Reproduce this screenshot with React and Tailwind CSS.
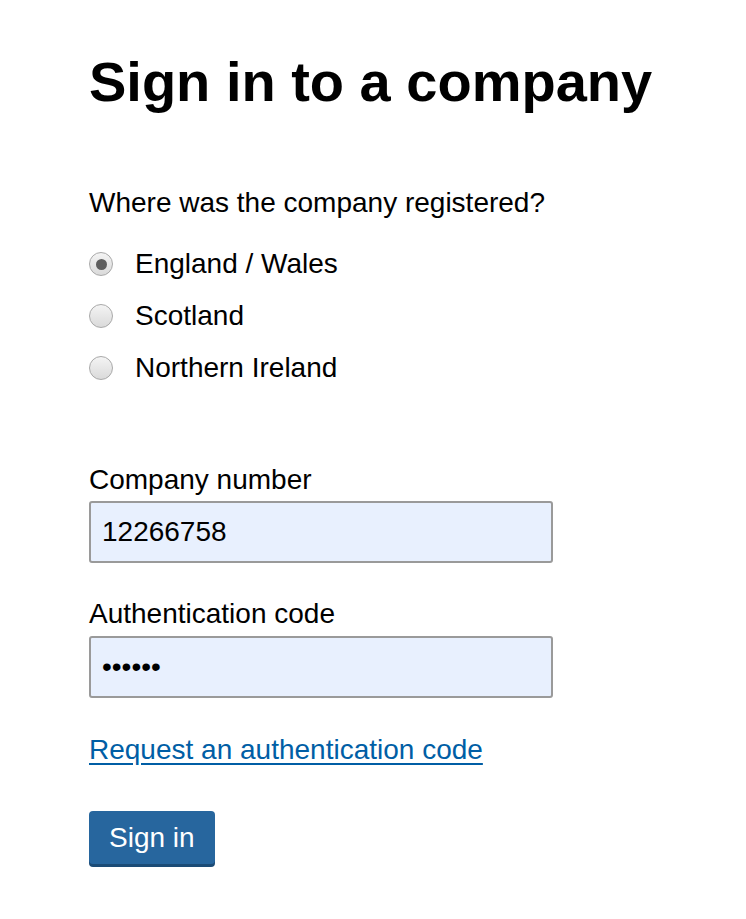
import { useState } from "react"

const regions = ["England / Wales", "Scotland", "Northern Ireland"]

function Radio({ checked }) {
  return (
    <span className="w-[24px] h-[24px] rounded-full border border-[#a9a9a9] bg-gradient-to-b from-[#f4f4f4] to-[#dadada] flex items-center justify-center shrink-0">
      {checked && <span className="w-[11px] h-[11px] rounded-full bg-[#5e5e5e]" />}
    </span>
  )
}

export default function App() {
  const [region, setRegion] = useState(regions[0])

  return (
    <div className="min-h-screen bg-white text-black font-['Liberation_Sans',Arial,sans-serif] pl-[89px] pt-[54px] pb-[40px]">
      <h1 className="text-[56px] leading-[56px] font-bold">Sign in to a company</h1>

      <form className="mt-[75px]" onSubmit={(e) => e.preventDefault()}>
        <p className="text-[28px] leading-[35px]">Where was the company registered?</p>

        {/* Region radios */}
        <div className="mt-[18px] flex flex-col">
          {regions.map((r) => (
            <label
              key={r}
              className="h-[52px] flex items-center gap-[22px] cursor-pointer"
              onClick={() => setRegion(r)}
            >
              <Radio checked={region === r} />
              <span className="text-[28px] leading-[52px]">{r}</span>
            </label>
          ))}
        </div>

        {/* Company number */}
        <div className="mt-[68px] flex flex-col">
          <label className="text-[28px] leading-[35px]">Company number</label>
          <div className="mt-[4px] w-[464px] h-[62px] border-2 border-[#9a9a9a] rounded-[3px] bg-[#e8f0fe] flex items-center px-[11px] text-[28px]">
            12266758
          </div>
        </div>

        {/* Authentication code */}
        <div className="mt-[33px] flex flex-col">
          <label className="text-[28px] leading-[35px]">Authentication code</label>
          <div className="mt-[5px] w-[464px] h-[62px] border-2 border-[#9a9a9a] rounded-[3px] bg-[#e8f0fe] flex items-center px-[11px] text-[28px]">
            ••••••
          </div>
        </div>

        <div className="mt-[34px]">
          <a href="#" className="text-[28px] leading-[35px] text-[#005ea5] underline underline-offset-[4px]">
            Request an authentication code
          </a>
        </div>

        <button
          type="submit"
          className="mt-[44px] h-[53px] px-[20px] rounded-[4px] bg-[#27669e] text-white text-[28px] shadow-[0_3px_0_#1b4b76]"
        >
          Sign in
        </button>
      </form>
    </div>
  )
}
